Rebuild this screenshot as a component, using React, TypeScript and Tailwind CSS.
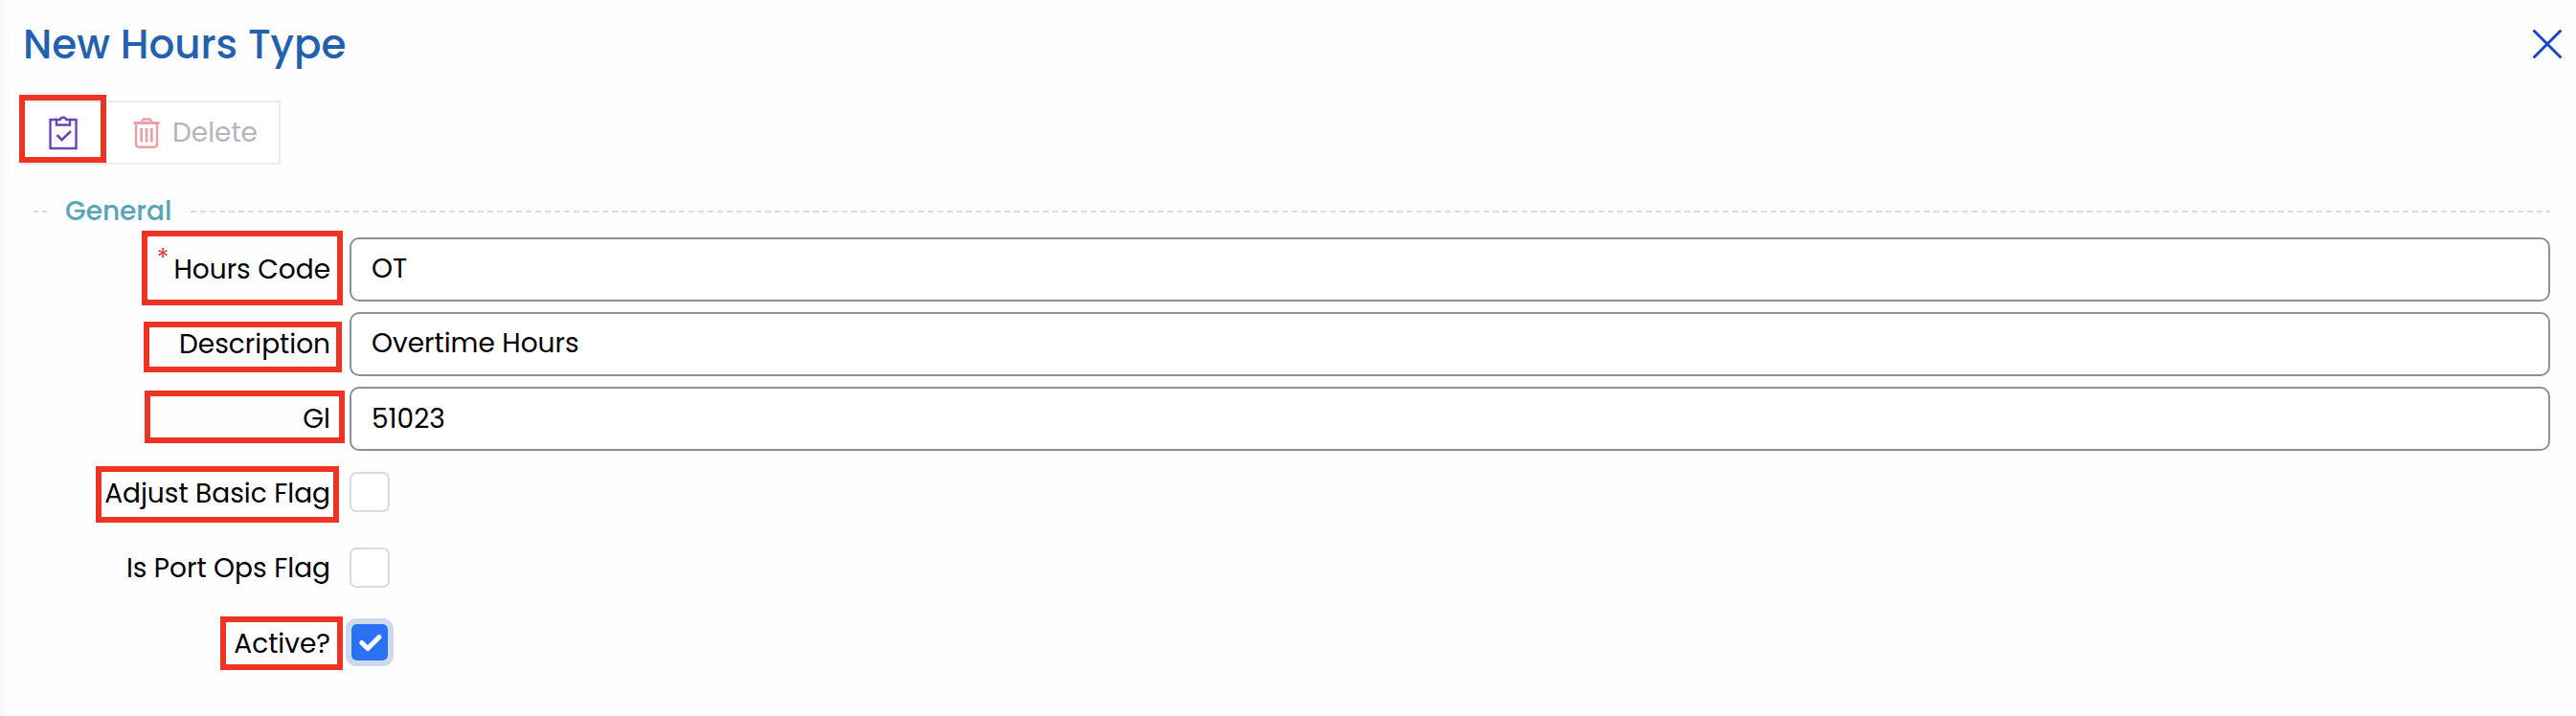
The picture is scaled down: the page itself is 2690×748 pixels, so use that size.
import { clsx } from "clsx";

interface FieldRowProps {
  label: string;
  labelClass?: string;
  required?: boolean;
  highlight?: string;
  children: React.ReactNode;
}

function Highlight({ className }: { className: string }) {
  return (
    <span
      className={clsx(
        "pointer-events-none absolute border-[6px] border-[#ed3323]",
        className
      )}
    />
  );
}

function FieldRow({ label, labelClass, required, highlight, children }: FieldRowProps) {
  return (
    <div className="relative flex h-[78px] items-start">
      <label className="flex h-[67px] w-[345px] shrink-0 items-center justify-end text-[28px] leading-none whitespace-nowrap">
        {required && (
          <span className="mr-[5px] -mt-[23px] text-[26px] text-[#d9434e]">*</span>
        )}
        <span className={labelClass}>{label}</span>
      </label>
      <div className="ml-[20px] flex h-[67px] flex-1">{children}</div>
      {highlight && <Highlight className={highlight} />}
    </div>
  );
}

function TextInput({ value, className }: { value: string; className?: string }) {
  return (
    <div className="flex h-[67px] w-full items-center rounded-[10px] border-2 border-[#87929a] bg-white px-[21px] pb-[2px] text-[28px] leading-none">
      <span className={className}>{value}</span>
    </div>
  );
}

function Checkbox({ checked, className }: { checked?: boolean; className?: string }) {
  return (
    <span
      className={clsx(
        "flex size-[42px] items-center justify-center rounded-[7px] border-2",
        checked
          ? "border-[#d0d9e4] bg-[#2b71f3] bg-clip-padding shadow-[0_0_0_4px_#cbdaf2]"
          : "border-[#d7dce0] bg-white",
        className
      )}
    >
      {checked && (
        <svg viewBox="0 0 38 38" className="size-[38px]" fill="none">
          <path d="M10.800 19.500l6.200 6L29 13.500" stroke="white" strokeWidth="5" strokeLinecap="round" strokeLinejoin="round" />
        </svg>
      )}
    </span>
  );
}

function ClipboardIcon() {
  return (
    <svg viewBox="0 0 30 36" className="h-[36px] w-[30px]" fill="none" stroke="#6746b9" strokeWidth="2.4">
      <path d="M8 4H1.500v30h27V4H22" />
      <path d="M8 4v5.500h14V4h-3.800a3.300 3 0 0 0-6.400 0z" />
      <path d="M8.500 20l5 5.200L23 16" strokeWidth="2.600" />
    </svg>
  );
}

function TrashIcon() {
  return (
    <svg viewBox="0 0 28 32" className="h-[32px] w-[28px]" fill="none" stroke="#e7a1a7" strokeWidth="2.400">
      <path d="M.5 5.500h27" strokeWidth="3" />
      <path d="M9.500 5V3.500Q9.500 1.500 11.500 1.500h5Q18.500 1.500 18.500 3.500V5" />
      <path d="M3 6v21.500Q3 30.700 6.500 30.700h15Q25 30.700 25 27.500V6" />
      <path d="M8.700 11v14.500M14 11v14.500M19.300 11v14.500" strokeWidth="2.800" />
    </svg>
  );
}

export default function App() {
  return (
    <div className="relative h-[748px] w-full overflow-hidden bg-[#fefefe] font-['Poppins','Inter',sans-serif] text-black">
      <div className="absolute inset-y-0 left-0 w-[10px] bg-linear-to-r from-[#f6f6f6] to-[#fefefe]" />

      <header className="flex h-[92px] items-center justify-between pr-[15px] pl-[24px]">
        <h1 className="pt-[2px] text-[42px] leading-none font-medium text-[#2361af]">New Hours Type</h1>
        <svg viewBox="0 0 30 30" className="size-[30px]" stroke="#1c46c8" strokeWidth="3" strokeLinecap="round">
          <path d="M1.500 1.500l27 27M28.500 1.500l-27 27" />
        </svg>
      </header>

      <div className="relative mt-[13px] ml-[21px] flex h-[67px] w-[272px] items-center border-2 border-[#e8ecef] bg-white">
        <button className="flex w-[85px] justify-center">
          <ClipboardIcon />
        </button>
        <button className="ml-[32px] flex items-center text-[28px] leading-none text-[#b3b5ba]">
          <span className="-ml-px">
            <TrashIcon />
          </span>
          <span className="ml-[13px] pt-px">Delete</span>
        </button>
        <Highlight className="-top-[8px] -left-[3px] h-[71px] w-[91px]" />
      </div>

      <div className="mt-[28px] flex h-[42px] items-center pr-[27px] pl-[35px]">
        <span className="h-[2px] w-[14px] bg-[repeating-linear-gradient(to_right,#dbdbdb_0_5px,transparent_5px_9px)]" />
        <span className="ml-[19px] w-[131px] text-[28px] leading-none font-medium text-[#57a5b8]">General</span>
        <span className="h-[2px] flex-1 bg-[repeating-linear-gradient(to_right,#dbdbdb_0_6px,transparent_6px_10px)]" />
      </div>

      <div className="mt-[6px] pr-[27px]">
        <FieldRow label="Hours Code" required highlight="-top-[7px] left-[148px] h-[78px] w-[210px]">
          <TextInput value="OT" />
        </FieldRow>
        <FieldRow label="Description" highlight="top-[10px] left-[150px] h-[53px] w-[207px]">
          <TextInput value="Overtime Hours" />
        </FieldRow>
        <FieldRow label="Gl" highlight="top-[4px] left-[151px] h-[55px] w-[209px]">
          <TextInput value="51023" className="pt-[2px]" />
        </FieldRow>
        <FieldRow label="Adjust Basic Flag" highlight="top-[5px] left-[100px] h-[59px] w-[254px]">
          <Checkbox className="mt-[11px]" />
        </FieldRow>
        <FieldRow label="Is Port Ops Flag">
          <Checkbox className="mt-[12px]" />
        </FieldRow>
        <FieldRow label="Active?" labelClass="pt-[2px]" highlight="top-[6px] left-[230px] h-[56px] w-[128px]">
          <Checkbox checked className="mt-[12px]" />
        </FieldRow>
      </div>
    </div>
  );
}
